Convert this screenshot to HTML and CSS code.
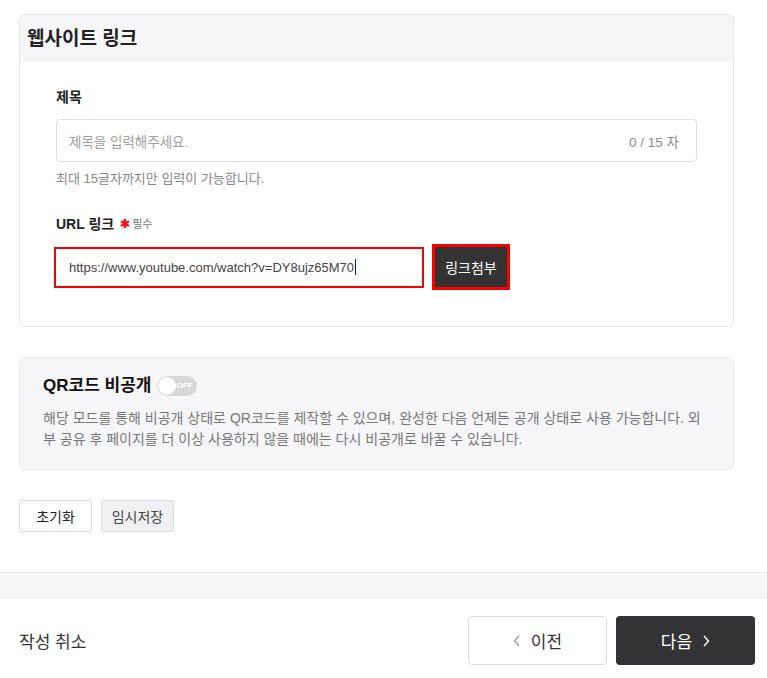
FILE: index.html
```html
<!DOCTYPE html>
<html lang="ko">
<head>
    <meta charset="UTF-8">
    <title>웹사이트 링크</title>
    <link rel="stylesheet" href="styles.css">
</head>
<body>
    <div class="wrap">
        <section class="card">
            <div class="card-head">웹사이트 링크</div>
            <div class="card-body">
                <div class="label">제목</div>
                <div class="text-field">
                    <span class="placeholder">제목을 입력해주세요.</span>
                    <span class="counter">0 / 15 자</span>
                </div>
                <p class="helper">최대 15글자까지만 입력이 가능합니다.</p>

                <div class="label label-url">URL 링크 <span class="req">✱</span><span class="req-text">필수</span></div>
                <div class="url-row">
                    <div class="url-input">https://www.youtube.com/watch?v=DY8ujz65M70<span class="caret"></span></div>
                    <button class="attach-btn">링크첨부</button>
                </div>
            </div>
        </section>

        <section class="qr-box">
            <div class="qr-title">
                QR코드 비공개
                <span class="toggle"><span class="knob"></span><span class="toggle-text">OFF</span></span>
            </div>
            <p class="qr-desc">해당 모드를 통해 비공개 상태로 QR코드를 제작할 수 있으며, 완성한 다음 언제든 공개 상태로 사용 가능합니다. 외부 공유 후 페이지를 더 이상 사용하지 않을 때에는 다시 비공개로 바꿀 수 있습니다.</p>
        </section>

        <div class="actions">
            <button class="small-btn">초기화</button>
            <button class="small-btn small-btn-gray">임시저장</button>
        </div>
    </div>

    <div class="band"></div>

    <footer class="footer">
        <span class="cancel">작성 취소</span>
        <div class="nav">
            <button class="nav-btn prev">
                <svg width="8" height="12" viewBox="0 0 8 12"><polyline points="6,1 1.5,6 6,11" fill="none" stroke="#999" stroke-width="1.2"/></svg>
                이전
            </button>
            <button class="nav-btn next">
                다음
                <svg width="8" height="12" viewBox="0 0 8 12"><polyline points="2,1 6.5,6 2,11" fill="none" stroke="#fff" stroke-width="1.4"/></svg>
            </button>
        </div>
    </footer>
</body>
</html>
```

FILE: styles.css
```css
body {
    margin: 0;
    font-family: "Liberation Sans", "Noto Sans CJK KR", sans-serif;
    color: #222;
    background: #fff;
}
.wrap {
    padding: 14px 33px 0 19px;
}
.card {
    border: 1px solid #e6e6ea;
    border-radius: 6px;
    overflow: hidden;
}
.card-head {
    height: 47px;
    background: #f6f6f8;
    padding-left: 7px;
    font-size: 19px;
    font-weight: 700;
    line-height: 47px;
    color: #222;
}
.card-body {
    padding: 25px 36px 39px 36px;
}
.label {
    font-size: 14px;
    font-weight: 700;
    line-height: 20px;
    color: #222;
}
.text-field {
    margin-top: 12px;
    height: 41px;
    border: 1px solid #e0e0e0;
    border-radius: 4px;
    display: flex;
    align-items: center;
    justify-content: space-between;
    padding: 0 17px 0 12px;
    font-size: 13.5px;
}
.placeholder {
    color: #a0a0a0;
}
.counter {
    color: #8a8a8a;
}
.helper {
    margin: 8px 0 0;
    font-size: 13px;
    line-height: 18px;
    color: #888;
}
.label-url {
    margin-top: 26px;
    display: flex;
    align-items: center;
}
.req {
    color: #f0141e;
    font-size: 12px;
    margin-left: 6px;
}
.req-text {
    font-size: 11px;
    font-weight: 400;
    color: #777;
    margin-left: 2px;
}
.url-row {
    margin-top: 13px;
    display: flex;
    align-items: center;
    gap: 13px;
}
.url-input {
    width: 353px;
    height: 37px;
    padding-left: 13px;
    outline: 2px solid #ff0000;
    display: flex;
    align-items: center;
    font-size: 13px;
    color: #444;
}
.caret {
    width: 1px;
    height: 16px;
    background: #222;
    margin-left: 1px;
}
.attach-btn {
    width: 72px;
    height: 40px;
    border: none;
    background: #333335;
    color: #fff;
    font-family: inherit;
    font-size: 14px;
    outline: 3px solid #ff0000;
}
.qr-box {
    margin-top: 30px;
    background: #f6f6f8;
    border: 1px solid #ebebee;
    border-radius: 6px;
    padding: 17px 24px 19px 23px;
}
.qr-title {
    font-size: 17px;
    font-weight: 700;
    line-height: 22px;
    display: flex;
    align-items: center;
    gap: 6px;
    color: #111;
}
.toggle {
    position: relative;
    width: 40px;
    height: 20px;
    border-radius: 10px;
    background: #d7d7da;
    display: inline-block;
}
.knob {
    position: absolute;
    left: 1px;
    top: 1px;
    width: 18px;
    height: 18px;
    border-radius: 50%;
    background: #fff;
}
.toggle-text {
    position: absolute;
    right: 5px;
    top: 0;
    font-size: 8px;
    line-height: 20px;
    font-weight: 700;
    color: #fff;
}
.qr-desc {
    margin: 11px 0 0;
    font-size: 14px;
    line-height: 21px;
    color: #777;
}
.actions {
    margin-top: 30px;
    display: flex;
    gap: 9px;
}
.small-btn {
    width: 73px;
    height: 32px;
    border: 1px solid #dcdcdf;
    border-radius: 3px;
    background: #fff;
    font-family: inherit;
    font-size: 14px;
    color: #222;
}
.small-btn-gray {
    background: #f0f0f3;
    color: #444;
}
.band {
    margin-top: 40px;
    height: 24px;
    background: #f6f6f8;
    border-top: 1px solid #ededf0;
    border-bottom: 1px solid #ededf0;
}
.footer {
    display: flex;
    align-items: center;
    justify-content: space-between;
    padding: 18px 12px 0 19px;
}
.cancel {
    font-size: 17px;
    color: #333;
}
.nav {
    display: flex;
    gap: 9px;
}
.nav-btn {
    width: 139px;
    height: 49px;
    border-radius: 4px;
    font-family: inherit;
    font-size: 17px;
    display: flex;
    align-items: center;
    justify-content: center;
    gap: 10px;
}
.prev {
    background: #fff;
    border: 1px solid #dcdcdf;
    color: #333;
}
.next {
    background: #333335;
    border: none;
    color: #fff;
}
```
